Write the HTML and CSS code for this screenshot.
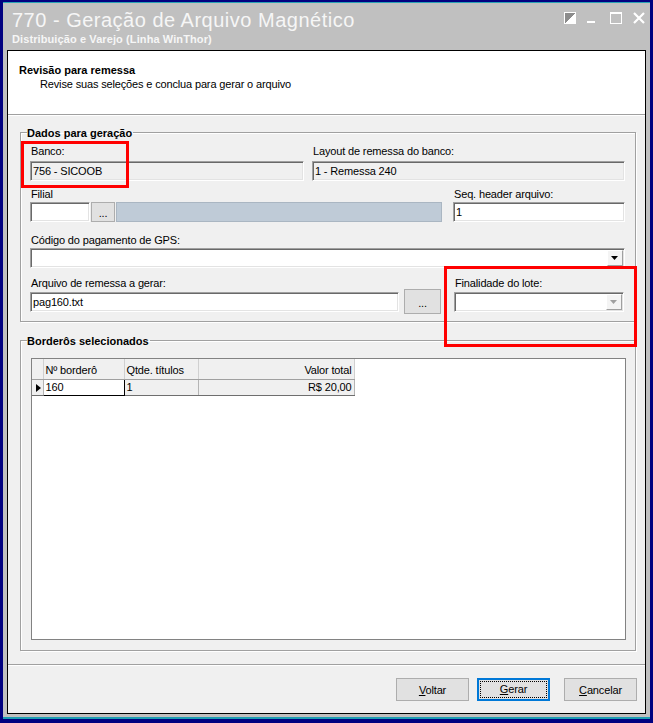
FILE: index.html
```html
<!DOCTYPE html>
<html lang="pt-BR">
<head>
  <meta charset="UTF-8">
  <title>770 - Geração de Arquivo Magnético</title>
  <link rel="stylesheet" href="styles.css">
</head>
<body>
  <div class="window">
    <!-- barra de titulo -->
    <div class="titlebar">
      <div class="caption">
        <div class="caption-title">770 - Geração de Arquivo Magnético</div>
        <div class="caption-sub">Distribuição e Varejo (Linha WinThor)</div>
      </div>
      <div class="caption-icons">
        <svg width="12" height="12" viewBox="0 0 12 12" shape-rendering="crispEdges">
          <rect x="0.5" y="0.5" width="11" height="11" fill="#8c8c8c" stroke="#fff"/>
          <polygon points="11,1 11,11 1,11" fill="#fff"/>
        </svg>
        <svg width="12" height="12" viewBox="0 0 12 12" shape-rendering="crispEdges">
          <rect x="0" y="9" width="8" height="2" fill="#fff"/>
        </svg>
        <svg width="12" height="12" viewBox="0 0 12 12" shape-rendering="crispEdges">
          <rect x="0.5" y="0.5" width="11" height="11" fill="none" stroke="#fff"/>
          <rect x="0" y="0" width="12" height="2" fill="#fff"/>
        </svg>
        <svg width="12" height="12" viewBox="0 0 12 12">
          <path d="M1 1 L11 11 M11 1 L1 11" stroke="#fff" stroke-width="2.2"/>
        </svg>
      </div>
    </div>

    <div class="panel">
      <div class="wiz-head">
        <div class="wiz-title">Revisão para remessa</div>
        <div class="wiz-desc">Revise suas seleções e conclua para gerar o arquivo</div>
      </div>

      <div class="wiz-body">
        <!-- dados -->
        <fieldset class="group">
          <legend>Dados para geração</legend>
          <div class="group-body">
            <div class="row row-1">
              <div class="field w-banco">
                <label>Banco:</label>
                <div class="edit disabled">756 - SICOOB</div>
              </div>
              <div class="field w-layout">
                <label>Layout de remessa do banco:</label>
                <div class="edit disabled">1 - Remessa 240</div>
              </div>
            </div>

            <div class="row row-2">
              <div class="field w-filial">
                <label>Filial</label>
                <div class="edit"></div>
              </div>
              <div class="dots btn-filial">...</div>
              <div class="lookup"></div>
              <div class="field w-seq">
                <label>Seq. header arquivo:</label>
                <div class="edit">1</div>
              </div>
            </div>

            <div class="row row-3">
              <div class="field w-full">
                <label>Código do pagamento de GPS:</label>
                <div class="edit combo">
                  <span class="drop">
                    <svg width="8" height="5" viewBox="0 0 8 5"><polygon points="0,0 7,0 3.5,4" fill="#000"/></svg>
                  </span>
                </div>
              </div>
            </div>

            <div class="row row-4">
              <div class="field w-arquivo">
                <label>Arquivo de remessa a gerar:</label>
                <div class="edit">pag160.txt</div>
              </div>
              <div class="dots btn-arquivo">...</div>
              <div class="field w-finalidade">
                <label>Finalidade do lote:</label>
                <div class="edit combo">
                  <span class="drop">
                    <svg width="8" height="5" viewBox="0 0 8 5"><polygon points="0,0 7,0 3.5,4" fill="#a0a0a0"/></svg>
                  </span>
                </div>
              </div>
            </div>
          </div>
        </fieldset>

        <!-- bordero -->
        <fieldset class="group group-borderos">
          <legend>Borderôs selecionados</legend>
          <div class="grid">
            <table>
              <colgroup>
                <col class="c-ind"><col class="c-num"><col class="c-qtd"><col class="c-val">
              </colgroup>
              <thead>
                <tr>
                  <th></th>
                  <th>Nº borderô</th>
                  <th>Qtde. títulos</th>
                  <th class="num">Valor total</th>
                </tr>
              </thead>
              <tbody>
                <tr>
                  <td class="ind">
                    <svg width="5" height="8" viewBox="0 0 5 8"><polygon points="0,0 5,4 0,8" fill="#000"/></svg>
                  </td>
                  <td class="focus">160</td>
                  <td>1</td>
                  <td class="num">R$ 20,00</td>
                </tr>
              </tbody>
            </table>
          </div>
        </fieldset>

        <span class="mark mark-banco"></span>
        <span class="mark mark-finalidade"></span>
      </div>

      <div class="wiz-foot">
        <button class="btn"><u>V</u>oltar</button>
        <button class="btn btn-default"><span class="focus-box"><u>G</u>erar</span></button>
        <button class="btn btn-cancel"><u>C</u>ancelar</button>
      </div>
    </div>
  </div>
</body>
</html>
```

FILE: styles.css
```css
body {
  margin: 0;
  width: 653px;
  height: 723px;
  overflow: hidden;
  background: #000080;
  font-family: "Liberation Sans", Arial, sans-serif;
  font-size: 11px;
  color: #000;
}

/* janela */
.window {
  box-sizing: border-box;
  width: 647px;
  height: 717px;
  margin: 2px 0 0 3px;
  background: #c0c0c0;
  border-top: 1px solid #2aa3b5;
  border-bottom: 2px solid #1c9db2;
}
.titlebar {
  display: flex;
  justify-content: space-between;
  height: 47px;
  padding: 0 5px 0 9px;
}
.caption {
  padding-top: 5px;
  color: #f6f6f6;
}
.caption-title {
  font-size: 20px;
  line-height: 24px;
  letter-spacing: 0.5px;
}
.caption-sub {
  margin-top: 1px;
  font-weight: bold;
  line-height: 13px;
  letter-spacing: 0.1px;
}
.caption-icons {
  display: flex;
  gap: 11px;
  margin-top: 9px;
  height: 12px;
}
.caption-icons svg {
  display: block;
}

.panel {
  box-sizing: border-box;
  display: flex;
  flex-direction: column;
  height: 664px;
  margin: 0 4px;
  border: 1px solid #000;
  background: #f0f0f0;
  letter-spacing: -0.15px;
}

/* cabecalho do assistente */
.wiz-head {
  height: 64px;
  padding: 12px 0 0 11px;
  box-sizing: border-box;
  background: #fff;
  border-bottom: 1px solid #a0a0a0;
  line-height: 14px;
}
.wiz-title {
  font-weight: bold;
  letter-spacing: 0;
}
.wiz-desc {
  padding-left: 21px;
}

.wiz-body {
  position: relative;
  flex: 1;
  border-top: 1px solid #fff;
  padding: 0 0 0 12px;
}

/* group box */
.group {
  box-sizing: border-box;
  width: 616px;
  margin: 8px 0 0;
  padding: 0;
  border: 1px solid #a0a0a0;
  box-shadow: inset 1px 1px #fff, 1px 1px #fff;
}
.group legend {
  margin-left: 6px;
  padding: 3px 1px 0 0;
  font-weight: bold;
  line-height: 13px;
  letter-spacing: 0;
}
.group-body {
  padding: 5px 10px 7px 9px;
}
.row {
  display: flex;
  align-items: flex-start;
}
.row-2 { margin-top: 7px; }
.row-3 { margin-top: 12px; }
.row-4 { margin-top: 9px; }

.field label {
  display: block;
  padding-left: 1px;
  line-height: 13px;
  height: 13px;
  white-space: nowrap;
}
.row-1 .edit { margin-top: 3px; }
.row-2 .edit,
.row-3 .edit { margin-top: 1px; }
.row-4 .edit { margin-top: 2px; }

.w-banco { width: 274px; }
.w-layout { width: 313px; margin-left: 8px; }
.w-filial { width: 60px; }
.w-seq { width: 172px; margin-left: 11px; }
.w-full { width: 595px; }
.w-arquivo { width: 369px; }
.w-finalidade { width: 170px; margin-left: 13px; }

.edit {
  box-sizing: border-box;
  height: 20px;
  padding: 0 2px;
  background: #fff;
  border: 1px solid;
  border-color: #a0a0a0 #fff #fff #a0a0a0;
  box-shadow: inset 1px 1px #696969, inset -1px -1px #e3e3e3;
  line-height: 18px;
  white-space: nowrap;
  overflow: hidden;
}
.edit.disabled {
  background: #f0f0f0;
}
.combo {
  display: flex;
  justify-content: flex-end;
  align-items: center;
  padding: 0 1px 0 0;
}
.drop {
  box-sizing: border-box;
  display: flex;
  align-items: center;
  justify-content: center;
  width: 16px;
  height: 16px;
  background: #f4f4f4;
  border: 1px solid;
  border-color: #fff #a0a0a0 #a0a0a0 #fff;
}
.drop svg {
  display: block;
}

.dots {
  box-sizing: border-box;
  background: #e1e1e1;
  border: 1px solid #adadad;
  text-align: center;
}
.btn-filial {
  width: 24px;
  height: 20px;
  margin: 14px 0 0 1px;
  line-height: 20px;
}
.lookup {
  box-sizing: border-box;
  width: 326px;
  height: 20px;
  margin: 14px 0 0 1px;
  background: #bfcbd7;
  border: 1px solid #aab6c2;
}
.btn-arquivo {
  width: 37px;
  height: 25px;
  margin: 12px 0 0 5px;
  line-height: 26px;
}

/* grade de borderos */
.group-borderos {
  margin-top: 10px;
}
.group-borderos .grid {
  box-sizing: border-box;
  width: 595px;
  height: 282px;
  margin: 10px 0 10px 10px;
  background: #fff;
  border: 1px solid #828282;
}
.grid table {
  border-collapse: collapse;
  table-layout: fixed;
  width: 322px;
}
.c-ind { width: 11px; }
.c-num { width: 81px; }
.c-qtd { width: 74px; }
.c-val { width: 156px; }
.grid th {
  height: 19px;
  padding: 1px 0 0 2px;
  background: #f0f0f0;
  border-right: 1px solid #d0d0d0;
  border-bottom: 1px solid #a0a0a0;
  font-weight: normal;
  text-align: left;
  line-height: 18px;
}
.grid td {
  height: 15px;
  padding: 0 0 0 2px;
  background: #f0f0f0;
  border-top: 1px solid #6e6e6e;
  border-bottom: 1px solid #6e6e6e;
  border-right: 1px solid #b4b4b4;
  line-height: 15px;
  white-space: nowrap;
}
.grid .num {
  text-align: right;
  padding-right: 2px;
}
.grid td.ind {
  padding: 0 0 0 4px;
}
.grid td.ind svg {
  display: block;
}
.grid td.focus {
  background: #fff;
  border: 1px solid #000;
}

/* marcacoes em vermelho */
.mark {
  position: absolute;
  box-sizing: border-box;
  border: 3px solid #f00;
}
.mark-banco {
  left: 13px;
  top: 25px;
  width: 108px;
  height: 47px;
}
.mark-finalidade {
  left: 436px;
  top: 150px;
  width: 193px;
  height: 81px;
}

/* rodape */
.wiz-foot {
  box-sizing: border-box;
  display: flex;
  justify-content: flex-end;
  height: 49px;
  padding: 13px 8px 0 0;
  border-top: 1px solid #a0a0a0;
  box-shadow: inset 0 1px #fff;
}
.btn {
  box-sizing: border-box;
  width: 73px;
  height: 23px;
  margin: 0;
  padding: 1px 0 0;
  background: #e1e1e1;
  border: 1px solid #adadad;
  font-family: inherit;
  font-size: 11px;
  line-height: 19px;
  letter-spacing: -0.15px;
  color: #000;
}
.btn-default {
  margin-left: 8px;
  padding: 1px;
  border: 2px solid #0078d7;
}
.btn-default .focus-box {
  display: block;
  height: 100%;
  box-sizing: border-box;
  border: 1px dotted #000;
  line-height: 15px;
}
.btn-cancel {
  margin-left: 14px;
}
```
